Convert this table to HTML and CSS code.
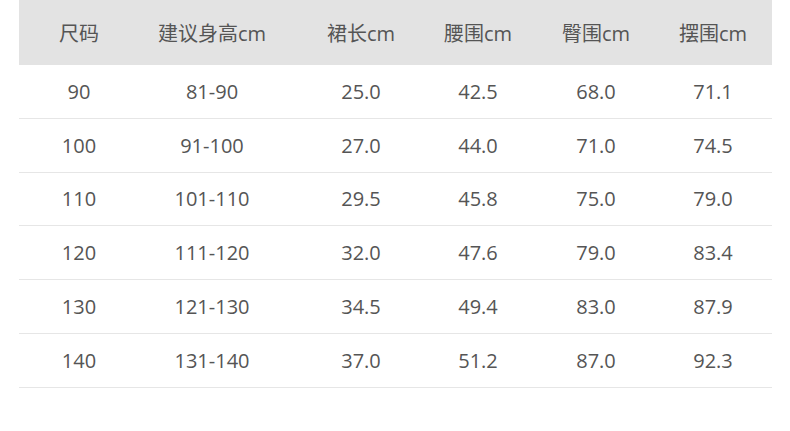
FILE: index.html
```html
<!DOCTYPE html>
<html lang="zh">
<head>
<meta charset="utf-8">
<link rel="stylesheet" href="styles.css">
</head>
<body>
<div class="table">
  <div class="row head">
    <div>尺码</div><div>建议身高cm</div><div>裙长cm</div><div>腰围cm</div><div>臀围cm</div><div>摆围cm</div>
  </div>
  <div class="row"><div>90</div><div>81-90</div><div>25.0</div><div>42.5</div><div>68.0</div><div>71.1</div></div>
  <div class="row"><div>100</div><div>91-100</div><div>27.0</div><div>44.0</div><div>71.0</div><div>74.5</div></div>
  <div class="row"><div>110</div><div>101-110</div><div>29.5</div><div>45.8</div><div>75.0</div><div>79.0</div></div>
  <div class="row"><div>120</div><div>111-120</div><div>32.0</div><div>47.6</div><div>79.0</div><div>83.4</div></div>
  <div class="row"><div>130</div><div>121-130</div><div>34.5</div><div>49.4</div><div>83.0</div><div>87.9</div></div>
  <div class="row"><div>140</div><div>131-140</div><div>37.0</div><div>51.2</div><div>87.0</div><div>92.3</div></div>
</div>
</body>
</html>
```
FILE: styles.css
```css
html, body {
  margin: 0;
  padding: 0;
  background: #fff;
}
body {
  font-family: "Open Sans", "Noto Sans CJK SC", sans-serif;
  font-size: 20px;
  color: #555;
}
.table {
  margin-left: 19px;
  width: 753px;
}
.row {
  display: grid;
  grid-template-columns: 120px 146px 152px 82px 154px 80px 1fr;
  height: 53.8px;
  box-sizing: border-box;
  border-bottom: 1px solid #e6e6e6;
  align-items: center;
  text-align: center;
}
.row.head {
  height: 65px;
  background: #e3e3e3;
  border-bottom: none;
}
```
